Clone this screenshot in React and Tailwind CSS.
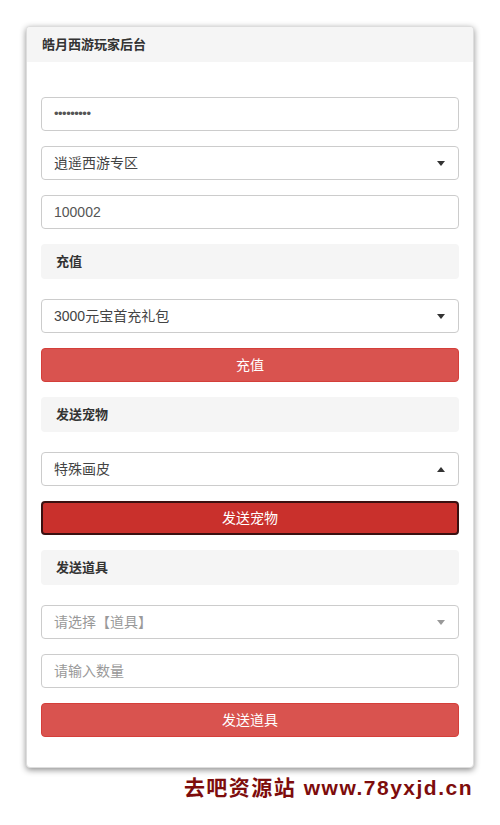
import { useState } from "react";

const font = { fontFamily: "'Liberation Sans', 'Noto Sans CJK SC', sans-serif" };

function Caret({ up, light }) {
  return (
    <svg width="8" height="5" viewBox="0 0 8 5" className={light ? "text-[#999]" : "text-[#333]"}>
      {up ? <path d="M0 5 L4 0 L8 5 Z" fill="currentColor" /> : <path d="M0 0 L8 0 L4 5 Z" fill="currentColor" />}
    </svg>
  );
}

function Field({ children, muted }) {
  return (
    <div className={`h-[34px] w-full rounded border border-[#ccc] bg-white px-3 flex items-center text-[14px] ${muted ? "text-[#999]" : "text-[#555]"}`}>
      {children}
    </div>
  );
}

function SelectBox({ value, up, placeholder }) {
  return (
    <div className="h-[34px] w-full rounded border border-[#ccc] bg-white pl-3 pr-[13px] flex items-center justify-between text-[14px]">
      <span className={placeholder ? "text-[#999]" : "text-[#444]"}>{value}</span>
      <Caret up={up} light={placeholder} />
    </div>
  );
}

function Section({ title }) {
  return (
    <div className="h-[35px] rounded bg-[#f5f5f5] px-[15px] flex items-center text-[13px] font-bold text-[#333]">
      {title}
    </div>
  );
}

function Btn({ label, active }) {
  return (
    <button
      className={`h-[34px] w-full rounded text-white text-[14px] ${
        active ? "bg-[#c9302c] border-2 border-[#3a1010] shadow-[0_0_0_1px_#fff]" : "bg-[#d9534f] border border-[#d43f3a]"
      }`}
    >
      {label}
    </button>
  );
}

export default function App() {
  const [pw] = useState("•••••••••");
  return (
    <div className="min-h-screen bg-white pt-[26px] px-[26px]" style={font}>
      <div className="rounded border border-[#ddd] bg-white shadow-[0_2px_6px_rgba(0,0,0,0.45)] overflow-hidden">
        <div className="h-[35px] bg-[#f5f5f5] px-[15px] flex items-center text-[13px] font-bold text-[#333]">
          皓月西游玩家后台
        </div>
        <div className="px-[14px] pt-[35px] pb-[30px] flex flex-col">
          <Field><span className="text-[#555] tracking-[-0.5px] text-[13px]">{pw}</span></Field>
          <div className="mt-[15px]"><SelectBox value="逍遥西游专区" /></div>
          <div className="mt-[15px]"><Field>100002</Field></div>
          <div className="mt-[15px]"><Section title="充值" /></div>
          <div className="mt-[20px]"><SelectBox value="3000元宝首充礼包" /></div>
          <div className="mt-[15px]"><Btn label="充值" /></div>
          <div className="mt-[15px]"><Section title="发送宠物" /></div>
          <div className="mt-[20px]"><SelectBox value="特殊画皮" up /></div>
          <div className="mt-[15px]"><Btn label="发送宠物" active /></div>
          <div className="mt-[15px]"><Section title="发送道具" /></div>
          <div className="mt-[20px]"><SelectBox value="请选择【道具】" placeholder /></div>
          <div className="mt-[15px]"><Field muted>请输入数量</Field></div>
          <div className="mt-[15px]"><Btn label="发送道具" /></div>
        </div>
      </div>
      <div className="flex justify-end pr-[1px] mt-[4px]">
        <span className="text-[21px] font-bold text-[#7d0c0c] tracking-[1.5px]">去吧资源站 www.78yxjd.cn</span>
      </div>
    </div>
  );
}
